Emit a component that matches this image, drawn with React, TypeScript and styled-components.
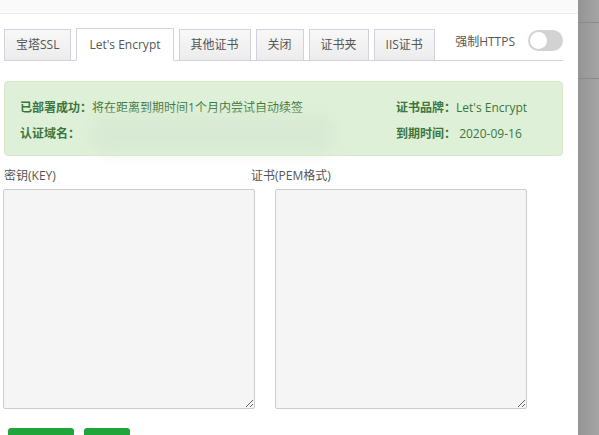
import React from "react";
import styled, { createGlobalStyle } from "styled-components";

const Global = createGlobalStyle`
  html, body { margin: 0; padding: 0; background: #fff; }
  body { font-family: "Open Sans", "Noto Sans CJK SC", sans-serif; font-size: 12px; color: #555; }
  * { box-sizing: border-box; }
`;

const Page = styled.div`
  display: flex;
  width: 599px;
  height: 435px;
  overflow: hidden;
`;

const Panel = styled.div`
  width: 578px;
  flex: none;
  background: #fff;
  display: flex;
  flex-direction: column;
`;

const Side = styled.div`
  flex: 1;
  background: linear-gradient(to right, #949494, #a4a4a4);
  display: flex;
  flex-direction: column;
`;

const SideLine = styled.div<{ $top: number }>`
  margin-top: ${(p) => p.$top}px;
  height: 1px;
  background: #8a8a8a;
`;

const Header = styled.div`
  height: 14px;
  background: #fafafa;
  border-bottom: 1px solid #ececec;
  flex: none;
`;

const Body = styled.div`
  padding: 14px 15px 0 4px;
  display: flex;
  flex-direction: column;
`;

const TabBar = styled.div`
  display: flex;
  align-items: flex-end;
  height: 33px;
  border-bottom: 1px solid #d3d1df;
`;

const Tab = styled.div<{ $active?: boolean }>`
  height: ${(p) => (p.$active ? 33 : 31)}px;
  margin-bottom: ${(p) => (p.$active ? -1 : 0)}px;
  padding: 0 ${(p) => (p.$active ? 12 : 11)}px;
  margin-right: 5px;
  border: 1px solid #d3d1df;
  border-bottom: ${(p) => (p.$active ? "1px solid #fff" : "none")};
  background: ${(p) => (p.$active ? "#fff" : "linear-gradient(#f8f8f8, #ececec)")};
  color: #555;
  font-size: 12px;
  line-height: ${(p) => (p.$active ? 32 : 30)}px;
  white-space: nowrap;
`;

const ForceHttps = styled.div`
  margin-left: auto;
  align-self: flex-start;
  display: flex;
  align-items: center;
  gap: 13px;
  padding-top: 2px;
  color: #555;
`;

const Toggle = styled.div`
  width: 35px;
  height: 21px;
  border-radius: 11px;
  background: #d2d2d2;
  position: relative;
`;

const Knob = styled.div`
  position: absolute;
  left: 2px;
  top: 2px;
  width: 17px;
  height: 17px;
  border-radius: 50%;
  background: #fff;
`;

const Alert = styled.div`
  margin-top: 20px;
  height: 75px;
  background: #dff0d8;
  border: 1px solid #d6e9c6;
  border-radius: 4px;
  padding: 12px 0 0 15px;
  display: grid;
  grid-template-columns: 376px 1fr;
  grid-auto-rows: 26px;
  color: #3c763d;
  position: relative;
`;

const Cell = styled.div`
  display: flex;
  align-items: center;
  white-space: nowrap;
`;

const Key = styled.b`
  font-weight: bold;
  color: #3c763d;
`;

const Blur = styled.div`
  position: absolute;
  left: 86px;
  top: 33px;
  width: 244px;
  height: 38px;
  border-radius: 16px;
  background: #d9ead4;
  filter: blur(6px);
`;

const Labels = styled.div`
  display: grid;
  grid-template-columns: 247px 1fr;
  margin-top: 11px;
  line-height: 18px;
  color: #555;
`;

const Areas = styled.div`
  display: flex;
  gap: 20px;
  margin-top: 4px;
  margin-left: -1px;
`;

const Area = styled.textarea`
  width: 252px;
  height: 220px;
  background: #f5f5f5;
  border: 1px solid #ccc;
  border-radius: 2px;
  margin: 0;
  resize: both;
  font-family: inherit;
`;

const Buttons = styled.div`
  display: flex;
  gap: 10px;
  margin-top: 19px;
  margin-left: 4px;
`;

const Btn = styled.button<{ $w: number }>`
  width: ${(p) => p.$w}px;
  height: 34px;
  background: #20a53a;
  border: none;
  border-radius: 3px;
  color: #fff;
  font-family: inherit;
  font-size: 12px;
  padding: 14px 0 0;
  flex: none;
`;

export default function App() {
  return (
    <>
      <Global />
      <Page>
        <Panel>
          <Header />
          <Body>
            <TabBar>
              <Tab>宝塔SSL</Tab>
              <Tab $active>Let's Encrypt</Tab>
              <Tab>其他证书</Tab>
              <Tab>关闭</Tab>
              <Tab>证书夹</Tab>
              <Tab>IIS证书</Tab>
              <ForceHttps>
                强制HTTPS
                <Toggle>
                  <Knob />
                </Toggle>
              </ForceHttps>
            </TabBar>
            <Alert>
              <Cell>
                <Key>已部署成功：</Key>将在距离到期时间1个月内尝试自动续签
              </Cell>
              <Cell>
                <Key>证书品牌：</Key>Let's Encrypt
              </Cell>
              <Cell>
                <Key>认证域名：</Key>
              </Cell>
              <Cell>
                <Key>到期时间：</Key>&nbsp;2020-09-16
              </Cell>
              <Blur />
            </Alert>
            <Labels>
              <span>密钥(KEY)</span>
              <span>证书(PEM格式)</span>
            </Labels>
            <Areas>
              <Area />
              <Area />
            </Areas>
            <Buttons>
              <Btn $w={66}>保存</Btn>
              <Btn $w={46}>关闭</Btn>
            </Buttons>
          </Body>
        </Panel>
        <Side>
          <SideLine $top={22} />
          <SideLine $top={55} />
        </Side>
      </Page>
    </>
  );
}
